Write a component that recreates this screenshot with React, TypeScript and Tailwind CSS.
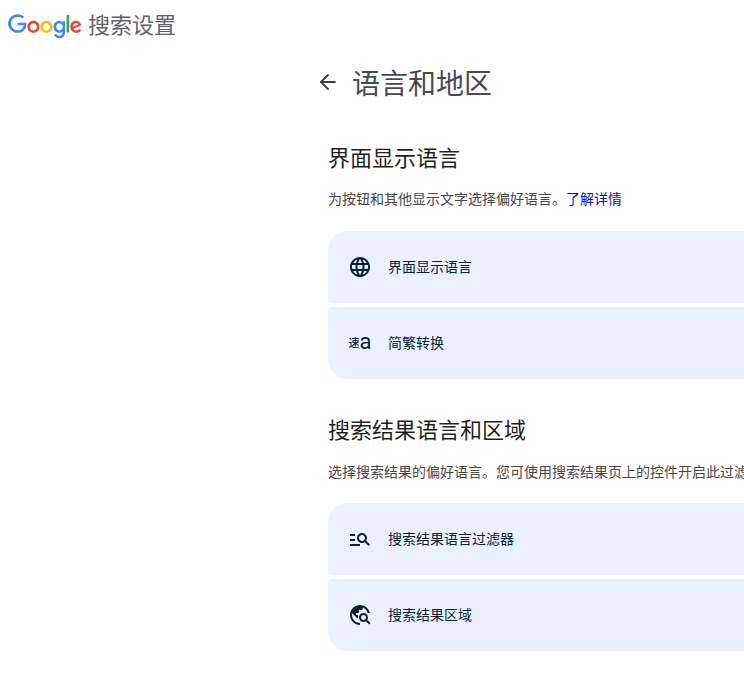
import { ArrowLeft } from 'lucide-react'

function GoogleLogo() {
  return (
    <svg viewBox="0 0 272 92" className="w-[74px] h-[25px]">
      <path fill="#EA4335" d="M115.75 47.18c0 12.77-9.99 22.18-22.25 22.18s-22.25-9.41-22.25-22.18C71.25 34.32 81.24 25 93.5 25s22.25 9.32 22.25 22.18zm-9.74 0c0-7.98-5.79-13.44-12.51-13.44S80.99 39.2 80.99 47.18c0 7.9 5.79 13.44 12.51 13.44s12.51-5.55 12.51-13.44z" />
      <path fill="#FBBC05" d="M163.75 47.18c0 12.77-9.99 22.18-22.25 22.18s-22.25-9.41-22.25-22.18c0-12.85 9.99-22.18 22.25-22.18s22.25 9.32 22.25 22.18zm-9.74 0c0-7.98-5.79-13.44-12.51-13.44s-12.51 5.46-12.51 13.44c0 7.9 5.79 13.44 12.51 13.44s12.51-5.55 12.51-13.44z" />
      <path fill="#4285F4" d="M209.75 26.34v39.82c0 16.38-9.66 23.07-21.08 23.07-10.75 0-17.22-7.19-19.66-13.07l8.48-3.53c1.51 3.61 5.21 7.87 11.17 7.87 7.31 0 11.84-4.51 11.84-13v-3.19h-.34c-2.18 2.69-6.38 5.04-11.68 5.04-11.09 0-21.25-9.66-21.25-22.09 0-12.52 10.16-22.26 21.25-22.26 5.29 0 9.49 2.35 11.68 4.96h.34v-3.61h9.25zm-8.56 20.92c0-7.81-5.21-13.52-11.84-13.52-6.72 0-12.35 5.71-12.35 13.52 0 7.73 5.63 13.36 12.35 13.36 6.63 0 11.84-5.63 11.84-13.36z" />
      <path fill="#34A853" d="M225 3v65h-9.5V3h9.5z" />
      <path fill="#EA4335" d="M262.02 54.48l7.56 5.04c-2.44 3.61-8.32 9.83-18.48 9.83-12.6 0-22.01-9.74-22.01-22.18 0-13.19 9.49-22.18 20.92-22.18 11.51 0 17.14 9.16 18.98 14.11l1.01 2.52-29.65 12.28c2.27 4.45 5.8 6.72 10.75 6.72 4.96 0 8.4-2.44 10.92-6.14zm-23.27-7.98l19.82-8.23c-1.09-2.77-4.37-4.7-8.23-4.7-4.95 0-11.84 4.37-11.59 12.93z" />
      <path fill="#4285F4" d="M35.29 41.41V32H67c.31 1.64.47 3.58.47 5.68 0 7.06-1.93 15.79-8.15 22.01-6.05 6.3-13.78 9.66-24.02 9.66C16.32 69.35.36 53.89.36 34.91.36 15.93 16.32.47 35.3.47c10.5 0 17.98 4.12 23.6 9.49l-6.64 6.64c-4.03-3.78-9.49-6.72-16.97-6.72-13.86 0-24.7 11.17-24.7 25.03 0 13.86 10.84 25.03 24.7 25.03 8.99 0 14.11-3.61 17.39-6.89 2.66-2.66 4.41-6.46 5.1-11.65l-22.49.01z" />
    </svg>
  )
}

function GlobeIcon() {
  return (
    <svg viewBox="0 0 24 24" fill="currentColor" className="w-6 h-6">
      <path d="M11.99 2C6.47 2 2 6.48 2 12s4.47 10 9.99 10C17.52 22 22 17.52 22 12S17.52 2 11.99 2zm6.93 6h-2.95c-.32-1.25-.78-2.45-1.38-3.56 1.84.63 3.37 1.91 4.33 3.56zM12 4.04c.83 1.2 1.48 2.53 1.91 3.96h-3.82c.43-1.43 1.08-2.76 1.91-3.96zM4.26 14C4.1 13.36 4 12.69 4 12s.1-1.36.26-2h3.38c-.08.66-.14 1.32-.14 2 0 .68.06 1.34.14 2H4.26zm.82 2h2.95c.32 1.25.78 2.45 1.38 3.56-1.84-.63-3.37-1.9-4.33-3.56zm2.95-8H5.08c.96-1.66 2.49-2.93 4.33-3.56C8.81 5.55 8.35 6.75 8.03 8zM12 19.96c-.83-1.2-1.48-2.53-1.91-3.96h3.82c-.43 1.43-1.08 2.76-1.91 3.96zM14.34 14H9.66c-.09-.66-.16-1.32-.16-2 0-.68.07-1.35.16-2h4.68c.09.65.16 1.32.16 2 0 .68-.07 1.34-.16 2zm.25 5.56c.6-1.11 1.06-2.31 1.38-3.56h2.95c-.96 1.65-2.49 2.93-4.33 3.56zM16.36 14c.08-.66.14-1.32.14-2 0-.68-.06-1.34-.14-2h3.38c.16.64.26 1.31.26 2s-.1 1.36-.26 2h-3.38z" />
    </svg>
  )
}

function ConvertIcon() {
  return (
    <span className="w-6 h-6 flex items-center justify-center whitespace-nowrap">
      <span className="text-[11px] leading-none font-medium">速</span>
      <span className="text-[22px] leading-none font-['Roboto',sans-serif] -mt-[3px]">a</span>
    </span>
  )
}

function ManageSearchIcon() {
  return (
    <svg viewBox="0 0 24 24" fill="currentColor" className="w-6 h-6">
      <path d="M7 9H2V7h5v2zm0 3H2v2h5v-2zm13.59 7l-3.83-3.83c-.8.52-1.74.83-2.76.83-2.76 0-5-2.24-5-5s2.24-5 5-5 5 2.24 5 5c0 1.02-.31 1.96-.83 2.75L22 17.59 20.59 19zM17 11c0-1.65-1.35-3-3-3s-3 1.35-3 3 1.35 3 3 3 3-1.35 3-3zM2 19h10v-2H2v2z" />
    </svg>
  )
}

function TravelExploreIcon() {
  return (
    <svg viewBox="0 0 24 24" fill="currentColor" className="w-6 h-6">
      <path d="M19.3 16.9c.4-.7.7-1.5.7-2.4 0-2.5-2-4.5-4.5-4.5S11 12 11 14.5s2 4.5 4.5 4.5c.9 0 1.7-.3 2.4-.7l3.2 3.2 1.4-1.4-3.2-3.2zm-3.8.1c-1.4 0-2.5-1.1-2.5-2.5s1.1-2.5 2.5-2.5 2.5 1.1 2.5 2.5-1.1 2.5-2.5 2.5zM12 20v2C6.48 22 2 17.52 2 12S6.48 2 12 2c4.84 0 8.87 3.44 9.8 8h-2.07c-.64-2.46-2.4-4.47-4.73-5.41V5c0 1.1-.9 2-2 2h-2v2c0 .55-.45 1-1 1H8v2h2v3H9l-4.79-4.79C4.08 10.79 4 11.38 4 12c0 4.41 3.59 8 8 8z" />
    </svg>
  )
}

interface RowProps {
  icon: React.ReactNode
  label: string
  shape: string
}

function Row({ icon, label, shape }: RowProps) {
  return (
    <div className={`h-[72px] w-[640px] bg-[#ebf1fe] flex items-center pl-5 text-[#0b2138] ${shape}`}>
      <div className="w-6 h-6 shrink-0">{icon}</div>
      <span className="ml-4 text-sm">{label}</span>
    </div>
  )
}

export default function App() {
  return (
    <div className="w-[744px] h-[697px] overflow-hidden bg-white font-['Roboto','Noto_Sans_CJK_SC',sans-serif]">
      <header className="flex items-center h-[52px] pl-2">
        <GoogleLogo />
        <span className="ml-[6px] text-[22px] leading-7 text-[#5f6368]">搜索设置</span>
      </header>

      <main className="pl-[316px]">
        <div className="flex items-center h-[60px]">
          <ArrowLeft className="w-6 h-6 text-[#3c4043]" strokeWidth={1.8} />
          <h1 className="ml-3 mt-[6px] text-[28px] leading-9 text-[#474a4e]">语言和地区</h1>
        </div>

        <section className="pl-3 mt-[33px]">
          <h2 className="text-[22px] leading-7 text-[#1f1f1f]">界面显示语言</h2>
          <p className="mt-[16px] text-sm leading-5 text-[#474747] whitespace-nowrap">
            为按钮和其他显示文字选择偏好语言。<a className="text-[#1a0dab]">了解详情</a>
          </p>
          <div className="mt-[22px] flex flex-col gap-1">
            <Row icon={<GlobeIcon />} label="界面显示语言" shape="rounded-t-[20px] rounded-b-[4px]" />
            <Row icon={<ConvertIcon />} label="简繁转换" shape="rounded-b-[20px] rounded-t-[4px]" />
          </div>
        </section>

        <section className="pl-3 mt-[38px]">
          <h2 className="text-[22px] leading-7 text-[#1f1f1f]">搜索结果语言和区域</h2>
          <p className="mt-[17px] text-sm leading-5 text-[#474747] whitespace-nowrap">
            选择搜索结果的偏好语言。您可使用搜索结果页上的控件开启此过滤器。
          </p>
          <div className="mt-[21px] flex flex-col gap-1">
            <Row icon={<ManageSearchIcon />} label="搜索结果语言过滤器" shape="rounded-t-[20px] rounded-b-[4px]" />
            <Row icon={<TravelExploreIcon />} label="搜索结果区域" shape="rounded-b-[20px] rounded-t-[4px]" />
          </div>
        </section>
      </main>
    </div>
  )
}
